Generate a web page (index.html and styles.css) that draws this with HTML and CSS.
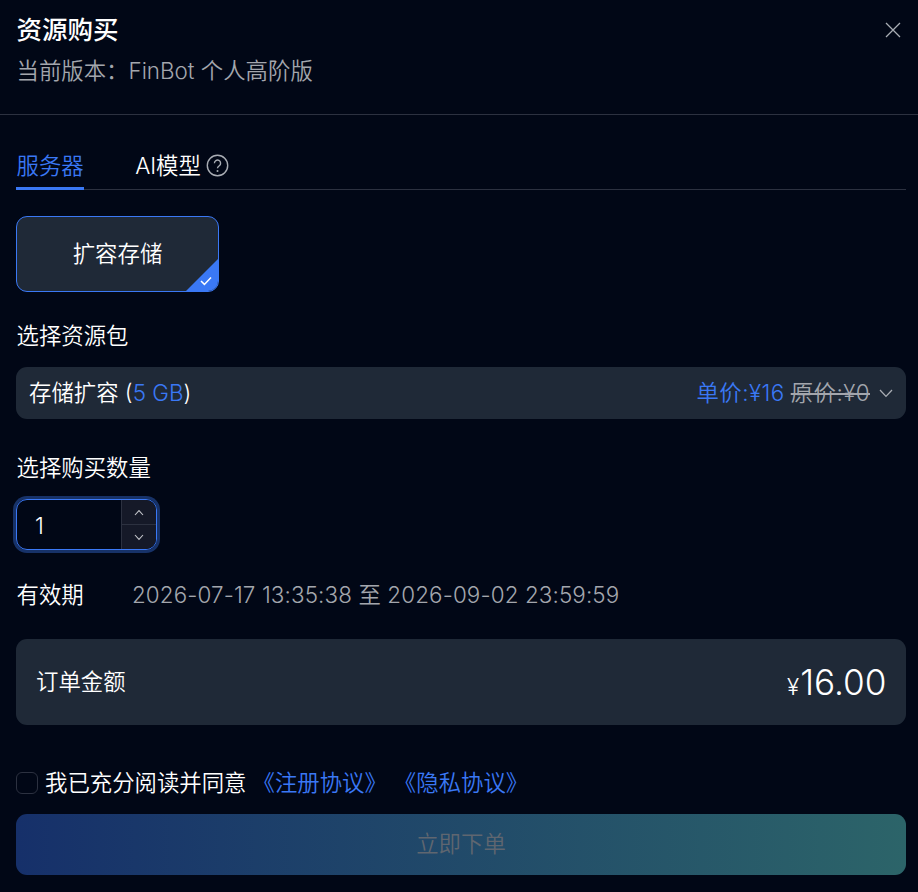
FILE: index.html
```html
<!DOCTYPE html>
<html lang="zh">
<head>
<meta charset="utf-8">
<title>资源购买</title>
<link rel="stylesheet" href="styles.css">
</head>
<body>
<div class="dialog">
  <header class="head">
    <div class="head-text">
      <h1 class="title">资源购买</h1>
      <p class="subtitle">当前版本：FinBot 个人高阶版</p>
    </div>
    <button class="close" aria-label="关闭">
      <svg width="16" height="16" viewBox="0 0 16 16"><path d="M1 1l14 14M15 1L1 15" stroke="#a9adb4" stroke-width="1.3" fill="none"/></svg>
    </button>
  </header>
  <main class="body">
    <nav class="tabs">
      <span class="tab active">服务器</span>
      <span class="tab">AI模型
        <svg class="help" width="23" height="23" viewBox="0 0 23 23"><circle cx="11.5" cy="11.5" r="10.2" stroke="#a9adb4" stroke-width="1.4" fill="none"/><path d="M8.4 9.2a3.1 3.1 0 1 1 4.9 2.5c-1.1.8-1.8 1.3-1.8 2.6" stroke="#a9adb4" stroke-width="1.4" fill="none"/><circle cx="11.5" cy="17" r="1" fill="#a9adb4"/></svg>
      </span>
    </nav>
    <div class="card">扩容存储
      <span class="corner"><svg width="12" height="10" viewBox="0 0 12 10"><path d="M1 5l3.4 3.4L11 1.4" stroke="#fff" stroke-width="1.5" fill="none"/></svg></span>
    </div>
    <div class="label label-pack">选择资源包</div>
    <div class="select">
      <span class="sel-left">存储扩容 (<b class="blue">5 GB</b>)</span>
      <span class="sel-right"><span class="blue price">单价:¥16</span> <s class="orig price">原价:¥0</s>
        <svg class="chev" width="14" height="9" viewBox="0 0 14 9"><path d="M1 1l6 6.4L13 1" stroke="#a9adb4" stroke-width="1.3" fill="none"/></svg>
      </span>
    </div>
    <div class="label label-qty">选择购买数量</div>
    <div class="stepper">
      <span class="num">1</span>
      <span class="steps">
        <span class="step"><svg width="10" height="7" viewBox="0 0 10 7"><path d="M1 6l4-4.4L9 6" stroke="#c4c6cb" stroke-width="1.1" fill="none"/></svg></span>
        <span class="step step-down"><svg width="10" height="7" viewBox="0 0 10 7"><path d="M1 1l4 4.4L9 1" stroke="#c4c6cb" stroke-width="1.1" fill="none"/></svg></span>
      </span>
    </div>
    <div class="valid"><span class="valid-k">有效期</span><span class="valid-v">2026-07-17 13:35:38 至 2026-09-02 23:59:59</span></div>
    <div class="order"><span class="order-k">订单金额</span><span class="amount"><small class="yen">¥</small>16.00</span></div>
    <div class="agree">
      <span class="check"></span><span>我已充分阅读并同意</span>
      <a class="link">《注册协议》</a><a class="link">《隐私协议》</a>
    </div>
    <button class="submit">立即下单</button>
  </main>
</div>
</body>
</html>
```

FILE: styles.css
```css
* { box-sizing: border-box; }
html, body { margin: 0; padding: 0; }
body {
  width: 918px;
  height: 892px;
  overflow: hidden;
  background: #010716;
  color: #fff;
  font-family: Inter, "Noto Sans CJK SC", sans-serif;
  font-size: 22.4px;
  font-weight: 350;
  line-height: 30px;
}
.dialog { display: flex; flex-direction: column; height: 100%; }
.head {
  height: 115px;
  padding: 13px 16px 0 16px;
  border-bottom: 1px solid #2c3140;
  display: flex;
  justify-content: space-between;
  align-items: flex-start;
}
.title { margin: 0; font-size: 25.5px; font-weight: 500; line-height: 34px; padding-left: .5px; }
.subtitle { margin: 9px 0 0; color: #a3a6ad; line-height: 30px; padding-left: .5px; }
.close { margin: 9px 1px 0 0; padding: 0; border: 0; background: none; width: 16px; height: 16px; display: block; }
.close svg { display: block; }
.body { padding: 0 12px 0 16px; display: flex; flex-direction: column; }
.tabs {
  margin-top: 36px;
  height: 39px;
  display: flex;
  gap: 51.5px;
  border-bottom: 1px solid #2c3140;
  line-height: 30px;
}
.tab { display: flex; align-items: flex-start; gap: 5px; height: 39px; }
.tab.active { color: #3a78f5; border-bottom: 3px solid #3a78f5; padding-left: .5px; }
.help { margin-top: 3px; }
.card {
  position: relative;
  margin-top: 26px;
  width: 203px;
  height: 76px;
  border: 1px solid #3a78f5;
  border-radius: 11px;
  background: #1f2937;
  display: flex;
  align-items: center;
  justify-content: center;
  overflow: hidden;
}
.corner {
  position: absolute;
  right: 0;
  bottom: 0;
  width: 32px;
  height: 32px;
  background: #3a78f5;
  clip-path: polygon(100% 0, 100% 100%, 0 100%);
}
.corner svg { position: absolute; right: 6px; bottom: 5px; }
.label { line-height: 30px; padding-left: .5px; }
.label-pack { margin-top: 29px; }
.select {
  margin-top: 16px;
  width: 890px;
  height: 52px;
  border-radius: 11px;
  background: #1f2937;
  padding: 0 13px 0 13px;
  display: flex;
  align-items: center;
  justify-content: space-between;
}
.blue { color: #3a78f5; font-weight: 350; }
.sel-right { display: flex; align-items: center; gap: 6px; }
.price { letter-spacing: .45px; }
.orig { color: #a3a6ad; }
.chev { margin-left: 3px; }
.label-qty { margin-top: 34px; }
.stepper {
  margin-top: 16px;
  width: 141px;
  height: 51px;
  border: 1px solid #3a78f5;
  border-radius: 11px;
  box-shadow: 0 0 0 3px #173268;
  display: flex;
  justify-content: space-between;
  overflow: hidden;
}
.num { padding: 11px 0 0 18px; line-height: 30px; }
.steps { width: 35px; display: flex; flex-direction: column; background: #151928; border-left: 1px solid #2c3140; }
.step { flex: 1; display: flex; align-items: center; justify-content: center; }
.step-down { border-top: 1px solid #2c3140; }
.valid { margin-top: 30px; display: flex; }
.valid-k { width: 116px; padding-left: .5px; }
.valid-v { color: #a3a6ad; letter-spacing: .12px; }
.order {
  margin-top: 29px;
  width: 890px;
  height: 86px;
  border-radius: 11px;
  background: #1f2937;
  padding: 0 19.5px 0 20px;
  display: flex;
  align-items: center;
  justify-content: space-between;
}
.order-k { margin-top: -1px; }
.amount { font-size: 35.2px; line-height: 44px; margin-top: 4px; }
.yen { font-size: 22.4px; margin-right: 1px; }
.agree { margin-top: 43px; display: flex; align-items: center; height: 30px; }
.check { width: 22px; height: 22px; border: 1px solid #2c3140; border-radius: 6px; margin-right: 7px; }
.link { color: #3a78f5; margin-left: 6px; }
.link + .link { margin-left: 7px; }
.submit {
  margin-top: 16px;
  width: 890px;
  height: 61px;
  padding: 0 0 2px;
  border: 0;
  border-radius: 11px;
  background: linear-gradient(90deg, #16306a, #2c6469);
  color: #5f6670;
  font: inherit;
}
```
